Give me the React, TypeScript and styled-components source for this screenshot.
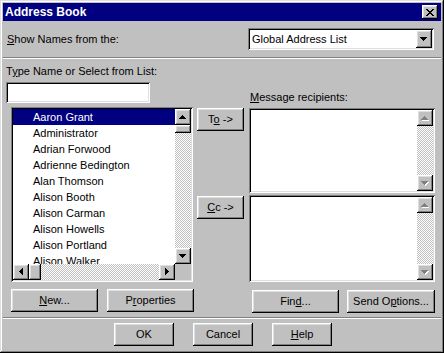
import styled, { createGlobalStyle } from "styled-components"

const GlobalStyle = createGlobalStyle`
  html, body {
    margin: 0;
    padding: 0;
    background: #c0c0c0;
  }
  body {
    font-family: "Liberation Sans", Arial, sans-serif;
    font-size: 11px;
    color: #000;
  }
`

const raised = `
  background: #c0c0c0;
  box-shadow: inset -1px -1px #000, inset 1px 1px #fff, inset -2px -2px #808080, inset 2px 2px #dfdfdf;
`

const sunken = `
  background: #fff;
  box-shadow: inset 1px 1px #808080, inset -1px -1px #fff, inset 2px 2px #000, inset -2px -2px #dfdfdf;
`

const dither = `
  background-color: #c0c0c0;
  background-image: repeating-conic-gradient(#fff 0% 25%, transparent 0% 50%);
  background-size: 2px 2px;
`

const Window = styled.div`
  width: 444px;
  height: 353px;
  box-sizing: border-box;
  padding: 3px;
  background: #c0c0c0;
  display: flex;
  flex-direction: column;
  box-shadow: inset -1px -1px #000, inset 1px 1px #dfdfdf, inset -2px -2px #808080, inset 2px 2px #fff;
`

const TitleBar = styled.div`
  height: 18px;
  flex-shrink: 0;
  background: #000080;
  color: #fff;
  display: flex;
  align-items: center;
  justify-content: space-between;
  padding: 0 3px 0 2px;
`

const Title = styled.span`
  font-weight: 700;
  font-size: 12px;
`

const CloseButton = styled.div`
  ${raised}
  width: 16px;
  height: 14px;
  display: flex;
  align-items: center;
  justify-content: center;
`

const TopRow = styled.div`
  height: 36px;
  display: flex;
  align-items: center;
  justify-content: space-between;
  padding: 0 7px 0 4px;
`

const Label = styled.div<{ $top?: number; $left?: number }>`
  line-height: 13px;
  margin-top: ${p => p.$top ?? 0}px;
  padding-left: ${p => p.$left ?? 0}px;
  white-space: nowrap;
`

const Combo = styled.div`
  ${sunken}
  width: 186px;
  height: 22px;
  box-sizing: border-box;
  padding: 2px;
  display: flex;
`

const ComboText = styled.div`
  flex: 1;
  padding-left: 2px;
  line-height: 18px;
`

const ArrowButton = styled.div<{ $w?: number; $h?: number }>`
  ${raised}
  width: ${p => p.$w ?? 16}px;
  height: ${p => p.$h ?? 16}px;
  flex-shrink: 0;
  display: flex;
  align-items: center;
  justify-content: center;
`

const Divider = styled.div`
  flex-shrink: 0;
  border-top: 1px solid #808080;
  border-bottom: 1px solid #fff;
`

const Main = styled.div`
  height: 258px;
  display: flex;
  padding-left: 3px;
`

const Column = styled.div<{ $width: number; $top?: number }>`
  width: ${p => p.$width}px;
  display: flex;
  flex-direction: column;
  padding-top: ${p => p.$top ?? 0}px;
`

const MiddleColumn = styled(Column)`
  margin: 0 5px 0 4px;
`

const NameInput = styled.div`
  ${sunken}
  margin-top: 4px;
  width: 144px;
  height: 21px;
`

const ListBox = styled.div`
  ${sunken}
  margin: 4px 0 0 5px;
  width: 182px;
  height: 175px;
  box-sizing: border-box;
  padding: 2px;
  display: grid;
  grid-template-columns: 1fr 16px;
  grid-template-rows: 1fr 16px;
`

const Items = styled.div`
  overflow: hidden;
`

const Item = styled.div<{ $selected?: boolean }>`
  height: 16px;
  line-height: 16px;
  padding-left: 20px;
  white-space: nowrap;
  background: ${p => (p.$selected ? "#000080" : "transparent")};
  color: ${p => (p.$selected ? "#fff" : "#000")};
`

const VScroll = styled.div`
  display: flex;
  flex-direction: column;
`

const HScroll = styled.div`
  display: flex;
`

const Track = styled.div`
  ${dither}
  flex: 1;
`

const Thumb = styled.div<{ $w: number; $h: number }>`
  ${raised}
  width: ${p => p.$w}px;
  height: ${p => p.$h}px;
  flex-shrink: 0;
`

const Corner = styled.div`
  background: #c0c0c0;
`

const RecipientBox = styled.div<{ $height: number; $top: number }>`
  ${sunken}
  margin-top: ${p => p.$top}px;
  height: ${p => p.$height}px;
  box-sizing: border-box;
  padding: 2px;
  display: flex;
  justify-content: flex-end;
`

const ButtonRow = styled.div<{ $top: number; $left: number; $gap: number }>`
  display: flex;
  margin-top: ${p => p.$top}px;
  padding-left: ${p => p.$left}px;
  gap: ${p => p.$gap}px;
`

const Button = styled.div<{ $w: number; $top?: number }>`
  ${raised}
  width: ${p => p.$w}px;
  height: 23px;
  margin-top: ${p => p.$top ?? 0}px;
  flex-shrink: 0;
  display: flex;
  align-items: center;
  justify-content: center;
  line-height: 13px;
  white-space: nowrap;
`

const BottomRow = styled.div`
  display: flex;
  gap: 19px;
  padding: 4px 0 0 111px;
`

const arrowPaths: Record<string, string> = {
  up: "M3 0h1v1H3zM2 1h3v1H2zM1 2h5v1H1zM0 3h7v1H0z",
  down: "M0 0h7v1H0zM1 1h5v1H1zM2 2h3v1H2zM3 3h1v1H3z",
  left: "M3 0h1v7H3zM2 1h1v5H2zM1 2h1v3H1zM0 3h1v1H0z",
  right: "M0 0h1v7H0zM1 1h1v5H1zM2 2h1v3H2zM3 3h1v1H3z",
}

const Arrow = ({ dir, disabled }: { dir: string; disabled?: boolean }) => {
  const vertical = dir === "up" || dir === "down"
  const w = vertical ? 7 : 4
  const h = vertical ? 4 : 7
  return (
    <svg width={w + 1} height={h + 1} shapeRendering="crispEdges">
      {disabled && <path d={arrowPaths[dir]} fill="#fff" transform="translate(1 1)" />}
      <path d={arrowPaths[dir]} fill={disabled ? "#808080" : "#000"} />
    </svg>
  )
}

const CloseGlyph = () => (
  <svg width="8" height="7" shapeRendering="crispEdges">
    <path
      d="M0 0h2v1H0zM6 0h2v1H6zM1 1h2v1H1zM5 1h2v1H5zM2 2h4v1H2zM3 3h2v1H3zM2 4h4v1H2zM1 5h2v1H1zM5 5h2v1H5zM0 6h2v1H0zM6 6h2v1H6z"
      fill="#000"
    />
  </svg>
)

const names = [
  "Aaron Grant",
  "Administrator",
  "Adrian Forwood",
  "Adrienne Bedington",
  "Alan Thomson",
  "Alison Booth",
  "Alison Carman",
  "Alison Howells",
  "Alison Portland",
  "Alison Walker",
]

const DisabledScroll = () => (
  <VScroll>
    <ArrowButton><Arrow dir="up" disabled /></ArrowButton>
    <Track />
    <ArrowButton><Arrow dir="down" disabled /></ArrowButton>
  </VScroll>
)

const App = () => {
  return (
    <>
      <GlobalStyle />
      <Window>
        <TitleBar>
          <Title>Address Book</Title>
          <CloseButton><CloseGlyph /></CloseButton>
        </TitleBar>

        <TopRow>
          <Label><u>S</u>how Names from the:</Label>
          <Combo>
            <ComboText>Global Address List</ComboText>
            <ArrowButton $h={18}><Arrow dir="down" /></ArrowButton>
          </Combo>
        </TopRow>

        <Divider />

        <Main>
          <Column $width={187}>
            <Label $top={6}>T<u>y</u>pe Name or Select from List:</Label>
            <NameInput />
            <ListBox>
              <Items>
                {names.map((n, i) => (
                  <Item key={n} $selected={i === 0}>{n}</Item>
                ))}
              </Items>
              <VScroll>
                <ArrowButton><Arrow dir="up" /></ArrowButton>
                <Thumb $w={16} $h={8} />
                <Track />
                <ArrowButton><Arrow dir="down" /></ArrowButton>
              </VScroll>
              <HScroll>
                <ArrowButton><Arrow dir="left" /></ArrowButton>
                <Thumb $w={12} $h={16} />
                <Track />
                <ArrowButton><Arrow dir="right" /></ArrowButton>
              </HScroll>
              <Corner />
            </ListBox>
            <ButtonRow $top={7} $left={5} $gap={9}>
              <Button $w={87}><span><u>N</u>ew...</span></Button>
              <Button $w={87}><span>P<u>r</u>operties</span></Button>
            </ButtonRow>
          </Column>

          <MiddleColumn $width={47}>
            <Button $w={47} $top={49}><span>T<u>o</u> -&gt;</span></Button>
            <Button $w={47} $top={65}><span><u>C</u>c -&gt;</span></Button>
          </MiddleColumn>

          <Column $width={186}>
            <Label $top={32} $left={1}><u>M</u>essage recipients:</Label>
            <RecipientBox $top={4} $height={85}>
              <DisabledScroll />
            </RecipientBox>
            <RecipientBox $top={2} $height={87}>
              <DisabledScroll />
            </RecipientBox>
            <ButtonRow $top={8} $left={3} $gap={8}>
              <Button $w={87}><span>Fin<u>d</u>...</span></Button>
              <Button $w={88}><span>Send O<u>p</u>tions...</span></Button>
            </ButtonRow>
          </Column>
        </Main>

        <Divider />

        <BottomRow>
          <Button $w={60}>OK</Button>
          <Button $w={60}>Cancel</Button>
          <Button $w={60}><span><u>H</u>elp</span></Button>
        </BottomRow>
      </Window>
    </>
  )
}

export default App
